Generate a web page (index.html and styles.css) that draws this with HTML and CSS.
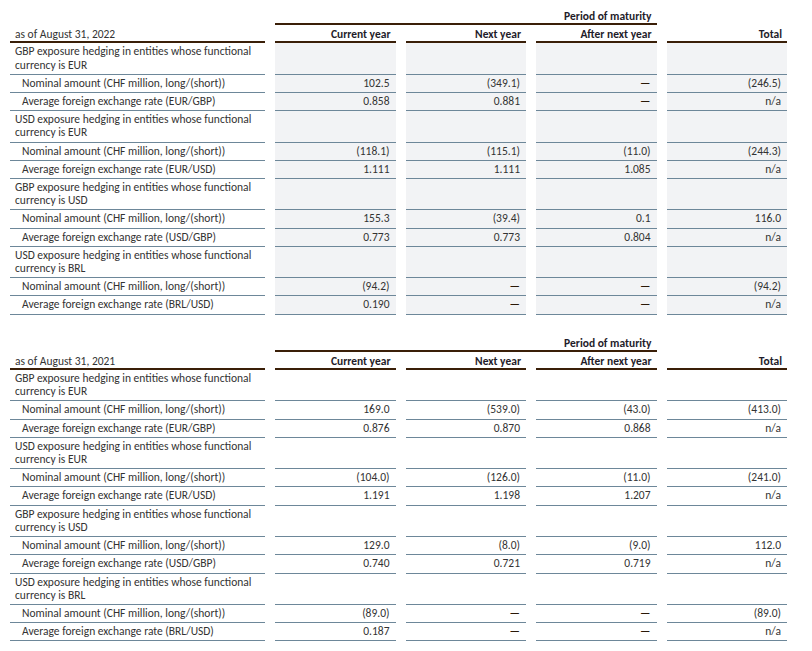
FILE: index.html
```html
<!DOCTYPE html>
<html lang="en">
<head>
<meta charset="utf-8">
<title>Foreign exchange hedging</title>
<link rel="stylesheet" href="styles.css">
</head>
<body>
<table class="fx shaded">
  <colgroup><col class="c-label"><col class="c-num"><col class="c-num"><col class="c-num"><col class="c-num"></colgroup>
  <thead>
    <tr class="period"><th class="blank"></th><th class="span" colspan="3">Period of maturity</th><th class="blank"></th></tr>
    <tr class="head"><th class="lab">as of August 31, 2022</th><th>Current year</th><th>Next year</th><th>After next year</th><th>Total</th></tr>
  </thead>
  <tbody>
    <tr><td class="group">GBP exposure hedging in entities whose functional currency is EUR</td><td class="num"></td><td class="num"></td><td class="num"></td><td class="num"></td></tr>
    <tr><td class="sub">Nominal amount (CHF million, long/(short))</td><td class="num">102.5</td><td class="num">(349.1)</td><td class="num"><span class="dash">—</span></td><td class="num">(246.5)</td></tr>
    <tr><td class="sub">Average foreign exchange rate (EUR/GBP)</td><td class="num">0.858</td><td class="num">0.881</td><td class="num"><span class="dash">—</span></td><td class="num">n/a</td></tr>
    <tr><td class="group">USD exposure hedging in entities whose functional currency is EUR</td><td class="num"></td><td class="num"></td><td class="num"></td><td class="num"></td></tr>
    <tr><td class="sub">Nominal amount (CHF million, long/(short))</td><td class="num">(118.1)</td><td class="num">(115.1)</td><td class="num">(11.0)</td><td class="num">(244.3)</td></tr>
    <tr><td class="sub">Average foreign exchange rate (EUR/USD)</td><td class="num">1.111</td><td class="num">1.111</td><td class="num">1.085</td><td class="num">n/a</td></tr>
    <tr><td class="group">GBP exposure hedging in entities whose functional currency is USD</td><td class="num"></td><td class="num"></td><td class="num"></td><td class="num"></td></tr>
    <tr><td class="sub">Nominal amount (CHF million, long/(short))</td><td class="num">155.3</td><td class="num">(39.4)</td><td class="num">0.1</td><td class="num">116.0</td></tr>
    <tr><td class="sub">Average foreign exchange rate (USD/GBP)</td><td class="num">0.773</td><td class="num">0.773</td><td class="num">0.804</td><td class="num">n/a</td></tr>
    <tr><td class="group">USD exposure hedging in entities whose functional currency is BRL</td><td class="num"></td><td class="num"></td><td class="num"></td><td class="num"></td></tr>
    <tr><td class="sub">Nominal amount (CHF million, long/(short))</td><td class="num">(94.2)</td><td class="num"><span class="dash">—</span></td><td class="num"><span class="dash">—</span></td><td class="num">(94.2)</td></tr>
    <tr><td class="sub">Average foreign exchange rate (BRL/USD)</td><td class="num">0.190</td><td class="num"><span class="dash">—</span></td><td class="num"><span class="dash">—</span></td><td class="num">n/a</td></tr>
  </tbody>
</table>

<table class="fx second">
  <colgroup><col class="c-label"><col class="c-num"><col class="c-num"><col class="c-num"><col class="c-num"></colgroup>
  <thead>
    <tr class="period"><th class="blank"></th><th class="span" colspan="3">Period of maturity</th><th class="blank"></th></tr>
    <tr class="head"><th class="lab">as of August 31, 2021</th><th>Current year</th><th>Next year</th><th>After next year</th><th>Total</th></tr>
  </thead>
  <tbody>
    <tr><td class="group">GBP exposure hedging in entities whose functional currency is EUR</td><td class="num"></td><td class="num"></td><td class="num"></td><td class="num"></td></tr>
    <tr><td class="sub">Nominal amount (CHF million, long/(short))</td><td class="num">169.0</td><td class="num">(539.0)</td><td class="num">(43.0)</td><td class="num">(413.0)</td></tr>
    <tr><td class="sub">Average foreign exchange rate (EUR/GBP)</td><td class="num">0.876</td><td class="num">0.870</td><td class="num">0.868</td><td class="num">n/a</td></tr>
    <tr><td class="group">USD exposure hedging in entities whose functional currency is EUR</td><td class="num"></td><td class="num"></td><td class="num"></td><td class="num"></td></tr>
    <tr><td class="sub">Nominal amount (CHF million, long/(short))</td><td class="num">(104.0)</td><td class="num">(126.0)</td><td class="num">(11.0)</td><td class="num">(241.0)</td></tr>
    <tr><td class="sub">Average foreign exchange rate (EUR/USD)</td><td class="num">1.191</td><td class="num">1.198</td><td class="num">1.207</td><td class="num">n/a</td></tr>
    <tr><td class="group">GBP exposure hedging in entities whose functional currency is USD</td><td class="num"></td><td class="num"></td><td class="num"></td><td class="num"></td></tr>
    <tr><td class="sub">Nominal amount (CHF million, long/(short))</td><td class="num">129.0</td><td class="num">(8.0)</td><td class="num">(9.0)</td><td class="num">112.0</td></tr>
    <tr><td class="sub">Average foreign exchange rate (USD/GBP)</td><td class="num">0.740</td><td class="num">0.721</td><td class="num">0.719</td><td class="num">n/a</td></tr>
    <tr><td class="group">USD exposure hedging in entities whose functional currency is BRL</td><td class="num"></td><td class="num"></td><td class="num"></td><td class="num"></td></tr>
    <tr><td class="sub">Nominal amount (CHF million, long/(short))</td><td class="num">(89.0)</td><td class="num"><span class="dash">—</span></td><td class="num"><span class="dash">—</span></td><td class="num">(89.0)</td></tr>
    <tr><td class="sub">Average foreign exchange rate (BRL/USD)</td><td class="num">0.187</td><td class="num"><span class="dash">—</span></td><td class="num"><span class="dash">—</span></td><td class="num">n/a</td></tr>
  </tbody>
</table>
</body>
</html>
```
FILE: styles.css
```css
html, body {
  background: #ffffff;
}

body {
  margin: 0;
  padding: 8px 0 0 0;
  font-family: "Carlito", "Lato", "Open Sans", sans-serif;
  font-size: 11.5px;
  line-height: 13.2px;
  color: #333333;
}

.fx {
  border-collapse: separate;
  border-spacing: 10px 0;
  table-layout: fixed;
  width: 797px;
}

.second {
  margin-top: 20px;
}

.c-label {
  width: 255px;
}

.c-num {
  width: 120.5px;
}

th, td {
  padding: 0;
  text-align: right;
  vertical-align: top;
}

th {
  font-weight: bold;
  color: #1f1c2a;
}

.period th {
  padding: 2px 5px 0 5px;
}

.period .span {
  border-bottom: 2px solid #3a1f08;
}

.head th {
  padding: 3px 5px 0 5px;
  border-bottom: 2px solid #3a1f08;
}

.head .lab {
  text-align: left;
  font-weight: normal;
  color: #333333;
}

tbody td {
  padding: 2px 5px 2px 5px;
  border-bottom: 1px solid #6d8799;
}

td.group {
  text-align: left;
  padding-right: 8px;
}

td.sub {
  text-align: left;
  padding-left: 12px;
}

td.num {
  padding-right: 6px;
}

.shaded td.num {
  background: #f2f3f5;
}

.dash {
  color: #2a1808;
}
```
